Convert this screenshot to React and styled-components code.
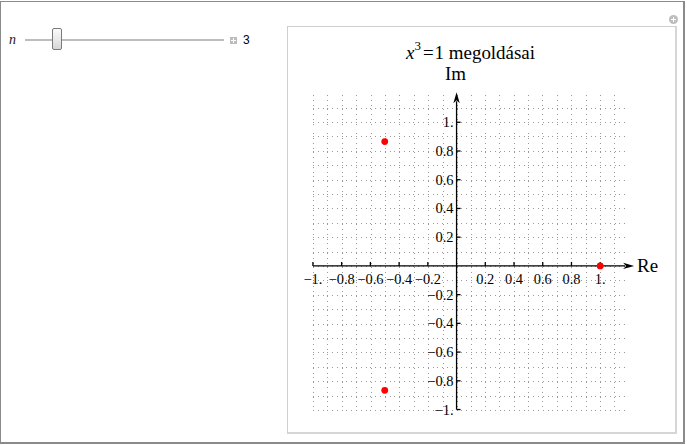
import React from 'react';
import styled, { createGlobalStyle } from 'styled-components';

const GlobalStyle = createGlobalStyle`
  html, body { margin: 0; padding: 0; background: #fff; }
  body { font-family: "Liberation Sans", Arial, sans-serif; }
`;

// plot geometry in page pixels
const OX = 458;
const OY = 266;
const U = 144;
const px = (v) => OX + v * U;
const py = (v) => OY - v * U;
const snap = (v) => Math.round(v) + 0.5;
const MIN = -1;
const MAX = 1.19;
const SERIF = '"Liberation Serif", "Times New Roman", serif';

const roots = [0, 1, 2].map((k) => ({
  re: Math.cos((2 * Math.PI * k) / 3),
  im: Math.sin((2 * Math.PI * k) / 3),
}));

const fmt = (v) => {
  if (Math.abs(v - 1) < 1e-9) return '1.';
  if (Math.abs(v + 1) < 1e-9) return '\u22121.';
  return (v < 0 ? '\u2212' : '') + Math.abs(v).toFixed(1);
};

const ticks = [-1, -0.8, -0.6, -0.4, -0.2, 0.2, 0.4, 0.6, 0.8, 1];
const gridSteps = Array.from({ length: 22 }, (_, i) => -1 + i * 0.1);

const Plot = () => (
  <svg width="388" height="405" viewBox="289 27 388 405">
    <g stroke="#9a9a9a" strokeWidth="1" strokeDasharray="1 3.8" shapeRendering="crispEdges">
      {gridSteps.map((v) => (
        <line key={'v' + v} x1={snap(px(v))} x2={snap(px(v))} y1={py(MAX)} y2={py(MIN)} />
      ))}
      {gridSteps.map((v) => (
        <line key={'h' + v} y1={snap(py(v))} y2={snap(py(v))} x1={px(MIN)} x2={px(MAX)} />
      ))}
    </g>

    <g stroke="#000" strokeWidth="1.3">
      <line x1={px(-1)} x2={627} y1={OY} y2={OY} />
      <line x1={OX} x2={OX} y1={py(-1)} y2={101} />
      {ticks.map((t) => (
        <line key={'tx' + t} x1={px(t)} x2={px(t)} y1={OY} y2={OY - 4} />
      ))}
      {ticks.map((t) => (
        <line key={'ty' + t} y1={py(t)} y2={py(t)} x1={OX} x2={OX + 4} />
      ))}
    </g>
    <polygon points={`636,${OY} 625,${OY - 3.2} 628,${OY} 625,${OY + 3.2}`} fill="#000" />
    <polygon points={`${OX},92 ${OX - 3.2},103 ${OX},100 ${OX + 3.2},103`} fill="#000" />

    {ticks.map((t) => (
      <text key={'lx' + t} x={px(t)} y={284} textAnchor="middle"
        fontFamily={SERIF} fontSize="14.5" fill="#000">{fmt(t)}</text>
    ))}
    {ticks.map((t) => (
      <text key={'ly' + t} x={OX - 3} y={py(t) + 5} textAnchor="end"
        fontFamily={SERIF} fontSize="14.5" fill="#000">{fmt(t)}</text>
    ))}

    <text x={457} y={80} textAnchor="middle" fontFamily={SERIF} fontSize="19" fill="#000">Im</text>
    <text x={639} y={272} fontFamily={SERIF} fontSize="19" fill="#000">Re</text>
    <text x={472} y={59} textAnchor="middle" fontFamily={SERIF} fontSize="19" fill="#000">
      <tspan fontStyle="italic">x</tspan>
      <tspan fontSize="13" dy="-9">3</tspan>
      <tspan dy="9" dx="2">=</tspan>
      <tspan dx="1">1 megoldásai</tspan>
    </text>

    {roots.map((r, i) => (
      <circle key={i} cx={px(r.re)} cy={py(r.im)} r="3.4" fill="#f00" />
    ))}
  </svg>
);

const Frame = styled.div`
  position: relative;
  box-sizing: border-box;
  width: 685px;
  height: 443px;
  margin-top: 1px;
  border: 1px solid #8a8a8a;
  border-right-width: 2px;
  border-bottom-width: 2px;
  display: flex;
  align-items: flex-start;
  padding: 24px 0 0 0;
`;

const Controls = styled.div`
  display: flex;
  align-items: center;
  height: 24px;
  margin-top: 2px;
  padding-left: 8px;
`;

const VarLabel = styled.span`
  font-family: "Liberation Serif", "Times New Roman", serif;
  font-style: italic;
  font-size: 14px;
  color: #1a1a1a;
  width: 16px;
`;

const Track = styled.div`
  position: relative;
  width: 199px;
  height: 2px;
  background: #bdbdbd;
`;

const Thumb = styled.div`
  position: absolute;
  top: -11px;
  left: 27px;
  box-sizing: border-box;
  width: 10px;
  height: 22px;
  border: 1px solid #7a7a7a;
  border-radius: 2px;
  background: linear-gradient(#fafafa, #e8e8e8 55%, #d6d6d6);
`;

const PlusBox = styled.div`
  box-sizing: border-box;
  width: 7px;
  height: 7px;
  margin-left: 6px;
  background: #bcbcbc;
  position: relative;
  &::before, &::after {
    content: '';
    position: absolute;
    background: #fff;
  }
  &::before { left: 3px; top: 1px; width: 1px; height: 5px; }
  &::after { left: 1px; top: 3px; width: 5px; height: 1px; }
`;

const Value = styled.span`
  margin-left: 6px;
  font-size: 12px;
  color: #000;
`;

const Panel = styled.div`
  box-sizing: border-box;
  width: 390px;
  height: 408px;
  margin-left: auto;
  margin-right: 6px;
  border: 1px solid #cfcfcf;
  border-right: 2px solid #d6d6d6;
  border-bottom: 2px solid #d6d6d6;
  display: flex;
  overflow: hidden;
`;

const Expand = styled.div`
  position: absolute;
  right: 5px;
  top: 13px;
  width: 9px;
  height: 9px;
  border-radius: 50%;
  background: #bdbdbd;
  &::before, &::after {
    content: '';
    position: absolute;
    background: #fff;
  }
  &::before { left: 4px; top: 2px; width: 1px; height: 5px; }
  &::after { left: 2px; top: 4px; width: 5px; height: 1px; }
`;

export default function App() {
  return (
    <>
      <GlobalStyle />
      <Frame>
        <Expand />
        <Controls>
          <VarLabel>n</VarLabel>
          <Track>
            <Thumb />
          </Track>
          <PlusBox />
          <Value>3</Value>
        </Controls>
        <Panel>
          <Plot />
        </Panel>
      </Frame>
    </>
  );
}
